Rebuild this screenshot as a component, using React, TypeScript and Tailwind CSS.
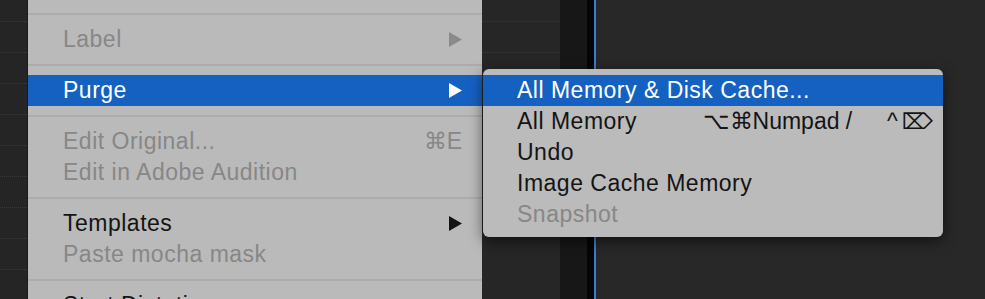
import React from 'react';

type Item =
  | { kind: 'sep' }
  | { kind: 'row'; label: string; state?: 'normal' | 'disabled' | 'active'; shortcut?: string; submenu?: boolean };

const mainItems: Item[] = [
  { kind: 'sep' },
  { kind: 'row', label: 'Label', state: 'disabled', submenu: true },
  { kind: 'sep' },
  { kind: 'row', label: 'Purge', state: 'active', submenu: true },
  { kind: 'sep' },
  { kind: 'row', label: 'Edit Original...', state: 'disabled', shortcut: '⌘E' },
  { kind: 'row', label: 'Edit in Adobe Audition', state: 'disabled' },
  { kind: 'sep' },
  { kind: 'row', label: 'Templates', submenu: true },
  { kind: 'row', label: 'Paste mocha mask', state: 'disabled' },
  { kind: 'sep' },
  { kind: 'row', label: 'Start Dictation...' },
];

const purgeItems = [
  { label: 'All Memory & Disk Cache...', state: 'active' },
  { label: 'All Memory', state: 'normal', shortcut: true },
  { label: 'Undo', state: 'normal' },
  { label: 'Image Cache Memory', state: 'normal' },
  { label: 'Snapshot', state: 'disabled' },
];

const font = { fontFamily: '"Liberation Sans", Arial, sans-serif' };

const Arrow: React.FC<{ color: string }> = ({ color }) => (
  <svg width="13" height="15" viewBox="0 0 13 15">
    <polygon points="0,0 13,7.5 0,15" fill={color} />
  </svg>
);

const textColor = (state?: string) =>
  state === 'active' ? 'text-white' : state === 'disabled' ? 'text-[#878787]' : 'text-[#141414]';

const App: React.FC = () => {
  return (
    <div className="relative w-[985px] h-[299px] overflow-hidden bg-[#262626] flex" style={font}>
      {/* left panel edge */}
      <div className="w-[28px] h-full bg-[#252525] border-r border-[#1b1b1b] flex flex-col pt-[21px] gap-[30px]">
        {Array.from({ length: 9 }).map((_, i) => (
          <div key={i} className="h-px border-t border-dotted border-[#3a3a3a]" />
        ))}
      </div>

      {/* main context menu */}
      <div className="w-[454px] h-full bg-[#bababa] flex flex-col pt-[4px] text-[23px] tracking-[0.5px]">
        {mainItems.map((item, i) =>
          item.kind === 'sep' ? (
            <div key={i} className="h-[20px] shrink-0 flex items-center">
              <div className="w-full h-[2px] bg-[#acacac]" />
            </div>
          ) : (
            <div
              key={i}
              className={`h-[31px] shrink-0 flex items-center pl-[35px] pr-[20px] leading-[31px] ${
                item.state === 'active' ? 'bg-[#1561c1]' : ''
              } ${textColor(item.state)}`}
            >
              <span className="flex-1 whitespace-nowrap">{item.label}</span>
              {item.shortcut && <span className="tracking-normal">{item.shortcut}</span>}
              {item.submenu && (
                <Arrow color={item.state === 'active' ? '#ffffff' : item.state === 'disabled' ? '#8a8a8a' : '#141414'} />
              )}
            </div>
          )
        )}
      </div>

      {/* panels behind, to the right */}
      <div className="w-[78px] h-full bg-[#262626] flex flex-col pt-[21px] gap-[30px]">
        <div className="h-px border-t border-dotted border-[#383838]" />
        <div className="h-px border-t border-dotted border-[#383838]" />
      </div>
      <div className="w-[27px] h-full bg-[#171717]" />
      <div className="w-[7px] h-full bg-[#050505]" />
      <div className="w-[2px] h-full bg-[#3b7bd3]" />
      <div className="flex-1 h-full bg-[#282828]" />

      {/* Purge submenu */}
      <div className="absolute left-[483px] top-[69px] w-[460px] h-[168px] bg-[#bbbbbb] rounded-[6px] pt-[6px] overflow-hidden shadow-[0_4px_14px_rgba(0,0,0,0.55)] text-[23px] tracking-[0.5px]">
        {purgeItems.map((item, i) => (
          <div
            key={i}
            className={`h-[31px] flex items-center pl-[34px] pr-[10px] leading-[31px] ${
              item.state === 'active' ? 'bg-[#1561c1]' : ''
            } ${textColor(item.state)}`}
          >
            <span className="w-[186px] whitespace-nowrap">{item.label}</span>
            {item.shortcut && (
              <>
                <span className="w-[185px] whitespace-nowrap tracking-normal">⌥⌘Numpad /</span>
                <span className="flex-1 flex justify-end items-center gap-[4px] tracking-normal">
                  <span>^</span>
                  <span style={{ fontFamily: '"DejaVu Sans", sans-serif' }} className="text-[22px]">
                    ⌦
                  </span>
                </span>
              </>
            )}
          </div>
        ))}
      </div>
    </div>
  );
};

export default App;
